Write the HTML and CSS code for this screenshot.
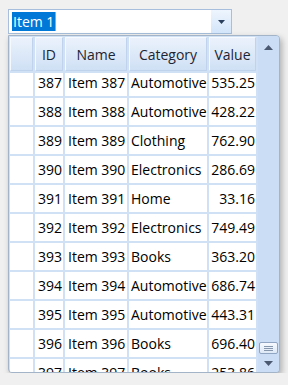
FILE: index.html
```html
<!DOCTYPE html>
<html lang="en">
<head>
  <meta charset="UTF-8" />
  <meta name="viewport" content="width=device-width, initial-scale=1" />
  <title>Item picker</title>
  <link rel="stylesheet" href="styles.css">
</head>
<body>

  <div class="combo">
    <span class="combo-text"><span class="selected">Item 1</span><span class="caret"></span></span>
    <div class="combo-button">
      <svg width="7" height="4" viewBox="0 0 7 4"><path d="M0 0H7L3.5 4Z" fill="#2b3f5c"/></svg>
    </div>
  </div>

  <div class="popup">
    <div class="grid-area">
      <div class="grid header-row">
        <div class="hcell"></div>
        <div class="hcell">ID</div>
        <div class="hcell">Name</div>
        <div class="hcell">Category</div>
        <div class="hcell">Value</div>
      </div>
      <div class="grid-body">
        <div class="grid rows" id="rows">
          <!-- rows are filled by the script -->
        </div>
      </div>
    </div>
    <div class="scrollbar">
      <div class="arrow up">
        <svg width="9" height="5" viewBox="0 0 9 5"><path d="M0 5H9L4.5 0Z" fill="#4a5870"/></svg>
      </div>
      <div class="track"></div>
      <div class="thumb"><span></span><span></span><span></span></div>
      <div class="arrow down">
        <svg width="9" height="5" viewBox="0 0 9 5"><path d="M0 0H9L4.5 5Z" fill="#4a5870"/></svg>
      </div>
    </div>
  </div>

  <script>
    const items = [
      { id: 387, category: 'Automotive', value: '535.25' },
      { id: 388, category: 'Automotive', value: '428.22' },
      { id: 389, category: 'Clothing', value: '762.90' },
      { id: 390, category: 'Electronics', value: '286.69' },
      { id: 391, category: 'Home', value: '33.16' },
      { id: 392, category: 'Electronics', value: '749.49' },
      { id: 393, category: 'Books', value: '363.20' },
      { id: 394, category: 'Automotive', value: '686.74' },
      { id: 395, category: 'Automotive', value: '443.31' },
      { id: 396, category: 'Books', value: '696.40' },
      { id: 397, category: 'Books', value: '253.86' }
    ];

    const rows = document.getElementById('rows');
    items.forEach(item => {
      rows.insertAdjacentHTML('beforeend', `
        <div class="cell"></div>
        <div class="cell num">${item.id}</div>
        <div class="cell name">Item ${item.id}</div>
        <div class="cell cat">${item.category}</div>
        <div class="cell num">${item.value}</div>
      `);
    });
  </script>
</body>
</html>
```

FILE: styles.css
```css
body {
  margin: 0;
  padding: 9px 0 0 8px;
  background: #f0f0f0;
  font-family: "Open Sans", "Noto Sans", sans-serif;
  font-size: 14px;
  color: #000;
}
.combo {
  width: 222px;
  height: 23px;
  border: 1px solid #a7bedc;
  background: white;
  display: flex;
  align-items: center;
}
.combo-text {
  display: flex;
  align-items: center;
  padding-left: 3px;
}
.selected {
  background: #0078d7;
  color: white;
  line-height: 19px;
  padding: 0 1px;
}
.caret {
  width: 1px;
  height: 19px;
  background: #ff8a28;
}
.combo-button {
  margin-left: auto;
  width: 20px;
  height: 23px;
  background: linear-gradient(#eef5fd, #d3e5fa);
  display: flex;
  align-items: center;
  justify-content: center;
}
.popup {
  width: 270px;
  height: 336px;
  margin-top: 1px;
  border: 1px solid #a3b3c8;
  border-radius: 0 4px 4px 4px;
  background: #d0e1f6;
  box-shadow: 2px 3px 6px rgba(0,0,0,0.28);
  display: flex;
  overflow: hidden;
}
.grid-area {
  padding: 1px 0 0 1px;
  width: 246px;
  display: flex;
  flex-direction: column;
  gap: 2px;
}
.grid {
  display: grid;
  grid-template-columns: 23px 28px 62px 78px 47px;
  column-gap: 2px;
}
.header-row .hcell {
  height: 34px;
  box-sizing: border-box;
  border: 1px solid #f6f9fe;
  border-right-color: #bfd3ec;
  border-bottom-color: #bfd3ec;
  background: linear-gradient(#ebf2fc, #cfe0f5);
  color: #1c2533;
  display: flex;
  align-items: center;
  justify-content: center;
}
.grid-body {
  flex: 1;
  overflow: hidden;
}
.rows {
  row-gap: 2px;
  margin-top: -4px;
}
.cell {
  height: 27px;
  background: white;
  line-height: 27px;
  white-space: nowrap;
  overflow: hidden;
}
.num {
  text-align: right;
  padding-right: 1px;
}
.name {
  padding-left: 3px;
}
.cat {
  padding-left: 2px;
}
.scrollbar {
  margin-left: 2px;
  width: 21px;
  background: #cbddf4;
  display: flex;
  flex-direction: column;
  align-items: center;
}
.arrow {
  height: 18px;
  width: 100%;
  display: flex;
  align-items: center;
  justify-content: center;
}
.arrow.up {
  padding-top: 2px;
}
.track {
  flex: 1;
}
.thumb {
  width: 19px;
  height: 12px;
  box-sizing: border-box;
  border: 1px solid #8fa5c2;
  border-radius: 2px;
  background: linear-gradient(#f6f9fe, #dde8f6);
  display: flex;
  flex-direction: column;
  align-items: center;
  justify-content: center;
  gap: 1px;
}
.thumb span {
  width: 9px;
  height: 1px;
  background: #8596ad;
}
.arrow.down {
  height: 18px;
}
```
